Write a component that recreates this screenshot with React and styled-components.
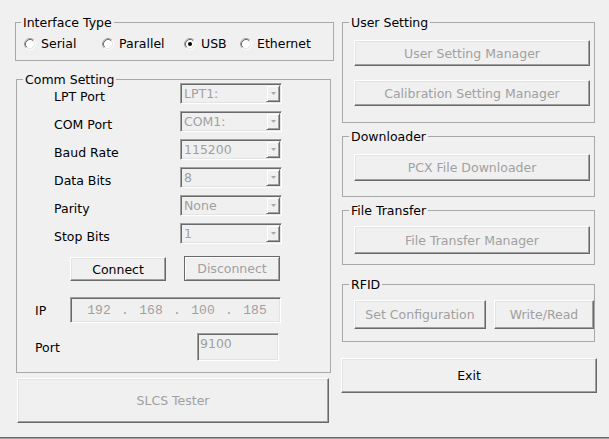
import React from 'react';
import styled, { createGlobalStyle } from 'styled-components';

const Global = createGlobalStyle`
  * { box-sizing: border-box; }
  html, body { margin: 0; padding: 0; background: #f0f0f0; }
  body {
    font-family: "DejaVu Sans", Verdana, sans-serif;
    font-size: 12.5px;
    color: #000;
  }
`;

const Window = styled.div`
  width: 609px;
  height: 439px;
  display: flex;
  gap: 7px;
  padding: 15px 0 0 15px;
  background: #f0f0f0;
  border-bottom: 1px solid #a0a0a0;
  box-shadow: inset 0 -1px 0 #696969;
  overflow: hidden;
`;

const Column = styled.div`
  width: ${(p) => p.$w}px;
  display: flex;
  flex-direction: column;
  align-items: flex-start;
`;

const Group = styled.fieldset`
  width: ${(p) => p.$w}px;
  margin: ${(p) => p.$mt || 0}px 0 0 ${(p) => p.$ml || 0}px;
  padding: 0;
  border: 1px solid #a8a8a8;
  min-width: 0;
`;

const Legend = styled.legend`
  margin-left: ${(p) => p.$ml ?? 6}px;
  padding: 0 2px;
  line-height: 15px;
  font-size: 12.5px;
  color: #000;
`;

const GroupBody = styled.div`
  display: flex;
  flex-direction: ${(p) => (p.$row ? 'row' : 'column')};
  align-items: flex-start;
  gap: ${(p) => p.$gap || 0}px;
  margin-top: ${(p) => p.$mt || 0}px;
  padding: ${(p) => p.$pad};
`;

const Button = styled.button`
  width: ${(p) => p.$w}px;
  height: ${(p) => p.$h}px;
  margin: ${(p) => p.$mt || 0}px 0 0 ${(p) => p.$ml || 0}px;
  padding: 0;
  font: inherit;
  font-size: 12.5px;
  color: ${(p) => (p.disabled ? '#a0a0a0' : '#000')};
  background: #f0f0f0;
  border: 1px solid;
  border-color: ${(p) => (p.$framed ? '#696969' : '#fff #696969 #696969 #fff')};
  box-shadow: ${(p) =>
    p.$framed
      ? 'inset 1px 1px 0 #fff, inset -1px -1px 0 #a0a0a0'
      : 'inset -1px -1px 0 #a0a0a0, inset 1px 1px 0 #e3e3e3'};
  flex-shrink: 0;
  cursor: default;
`;

/* Interface type radios */
const RadioItem = styled.label`
  display: flex;
  align-items: center;
  gap: 5px;
  width: ${(p) => (p.$w ? `${p.$w}px` : 'auto')};
  line-height: 15px;
  white-space: nowrap;
`;

const RadioMark = ({ checked }) => (
  <svg width="12" height="12" viewBox="0 0 12 12">
    <circle cx="6" cy="6" r="4.5" fill="#fff" />
    <path d="M2.11 9.89 A5.5 5.5 0 0 1 9.89 2.11" stroke="#a0a0a0" fill="none" />
    <path d="M2.82 9.18 A4.5 4.5 0 0 1 9.18 2.82" stroke="#696969" fill="none" />
    <path d="M9.89 2.11 A5.5 5.5 0 0 1 2.11 9.89" stroke="#ffffff" fill="none" />
    <path d="M9.18 2.82 A4.5 4.5 0 0 1 2.82 9.18" stroke="#e3e3e3" fill="none" />
    {checked && <circle cx="6" cy="6" r="2" fill="#000" />}
  </svg>
);

/* Comm settings */
const Row = styled.div`
  display: flex;
  align-items: ${(p) => p.$align || 'center'};
  margin-top: ${(p) => p.$mt || 0}px;
  padding-left: ${(p) => p.$pl || 0}px;
  gap: ${(p) => p.$gap || 0}px;
  height: ${(p) => p.$h}px;
`;

const Label = styled.span`
  width: ${(p) => p.$w}px;
  padding-top: ${(p) => p.$pt || 0}px;
  line-height: 15px;
  flex-shrink: 0;
`;

const sunken = `
  border: 1px solid;
  border-color: #a0a0a0 #fff #fff #a0a0a0;
  box-shadow: inset 1px 1px 0 #696969, inset -1px -1px 0 #e3e3e3;
  background: #f0f0f0;
`;

const Combo = styled.div`
  ${sunken}
  width: 102px;
  height: 21px;
  padding: 1px;
  display: flex;
  align-items: stretch;
`;

const ComboText = styled.span`
  flex: 1;
  padding-left: 2px;
  line-height: 17px;
  color: #a0a0a0;
`;

const ComboArrow = styled.span`
  width: 14px;
  display: flex;
  align-items: center;
  justify-content: center;
  border: 1px solid;
  border-color: #f0f0f0 #696969 #696969 #f0f0f0;
  box-shadow: inset 1px 1px 0 #fff, inset -1px -1px 0 #a0a0a0;
  background: #f0f0f0;
`;

const Field = styled.div`
  ${sunken}
  width: ${(p) => p.$w}px;
  height: ${(p) => p.$h}px;
  display: flex;
  align-items: ${(p) => (p.$top ? 'flex-start' : 'center')};
  padding: ${(p) => p.$pad};
  color: #a0a0a0;
  line-height: 15px;
`;

const IpNum = styled.span`
  width: 44px;
  text-align: center;
  font-family: "Liberation Mono", "DejaVu Sans Mono", monospace;
  font-size: 13px;
`;

const IpDot = styled.span`
  width: 8px;
  text-align: center;
  font-family: "Liberation Mono", "DejaVu Sans Mono", monospace;
  font-size: 13px;
`;

const ComboBox = ({ value }) => (
  <Combo>
    <ComboText>{value}</ComboText>
    <ComboArrow>
      <svg width="5" height="3" viewBox="0 0 5 3">
        <path d="M0 0h5L2.5 3z" fill="#a8a8a8" />
      </svg>
    </ComboArrow>
  </Combo>
);

const commRows = [
  ['LPT Port', 'LPT1:'],
  ['COM Port', 'COM1:'],
  ['Baud Rate', '115200'],
  ['Data Bits', '8'],
  ['Parity', 'None'],
  ['Stop Bits', '1'],
];

const radios = [
  { label: 'Serial', w: 78 },
  { label: 'Parallel', w: 82 },
  { label: 'USB', w: 56, checked: true },
  { label: 'Ethernet' },
];

export default function App() {
  return (
    <>
      <Global />
      <Window>
        <Column $w={319}>
          <Group $w={319}>
            <Legend $ml={5}>Interface Type</Legend>
            <GroupBody $row $pad="6px 0 9px 8px">
              {radios.map((r) => (
                <RadioItem key={r.label} $w={r.w}>
                  <RadioMark checked={r.checked} />
                  {r.label}
                </RadioItem>
              ))}
            </GroupBody>
          </Group>

          <Group $w={315} $ml={1} $mt={11}>
            <Legend>Comm Setting</Legend>
            <GroupBody $mt={-4} $gap={7} $pad="0 0 11px 18px">
              {commRows.map(([l, v]) => (
                <Row key={l} $align="flex-start" $pl={19} $h={21}>
                  <Label $w={126} $pt={6}>{l}</Label>
                  <ComboBox value={v} />
                </Row>
              ))}
              <Row $align="flex-end" $pl={35} $gap={18} $mt={5} $h={25}>
                <Button $w={96} $h={24}>Connect</Button>
                <Button $w={96} $h={25} $framed disabled>Disconnect</Button>
              </Row>
              <Row $mt={9} $h={26}>
                <Label $w={35}>IP</Label>
                <Field $w={211} $h={26} $pad="0 0 0 6px">
                  <IpNum>192</IpNum>
                  <IpDot>.</IpDot>
                  <IpNum>168</IpNum>
                  <IpDot>.</IpDot>
                  <IpNum>100</IpNum>
                  <IpDot>.</IpDot>
                  <IpNum>185</IpNum>
                </Field>
              </Row>
              <Row $mt={3} $h={28}>
                <Label $w={162}>Port</Label>
                <Field $w={82} $h={28} $top $pad="2px 0 0 2px">9100</Field>
              </Row>
            </GroupBody>
          </Group>

          <Button $w={312} $h={45} $ml={2} $mt={5} disabled>SLCS Tester</Button>
        </Column>

        <Column $w={256}>
          <Group $w={253} $ml={1}>
            <Legend>User Setting</Legend>
            <GroupBody $gap={14} $pad="10px 0 16px 11px">
              <Button $w={236} $h={26} disabled>User Setting Manager</Button>
              <Button $w={236} $h={26} disabled>Calibration Setting Manager</Button>
            </GroupBody>
          </Group>

          <Group $w={253} $ml={1} $mt={6}>
            <Legend>Downloader</Legend>
            <GroupBody $pad="10px 0 15px 11px">
              <Button $w={236} $h={27} disabled>PCX File Downloader</Button>
            </GroupBody>
          </Group>

          <Group $w={253} $ml={1} $mt={6}>
            <Legend>File Transfer</Legend>
            <GroupBody $pad="8px 0 10px 11px">
              <Button $w={236} $h={28} disabled>File Transfer Manager</Button>
            </GroupBody>
          </Group>

          <Group $w={253} $ml={1} $mt={12}>
            <Legend>RFID</Legend>
            <GroupBody $row $gap={8} $pad="8px 0 12px 11px">
              <Button $w={132} $h={29} disabled>Set Configuration</Button>
              <Button $w={100} $h={29} disabled>Write/Read</Button>
            </GroupBody>
          </Group>

          <Button $w={256} $h={35} $mt={16}>Exit</Button>
        </Column>
      </Window>
    </>
  );
}
